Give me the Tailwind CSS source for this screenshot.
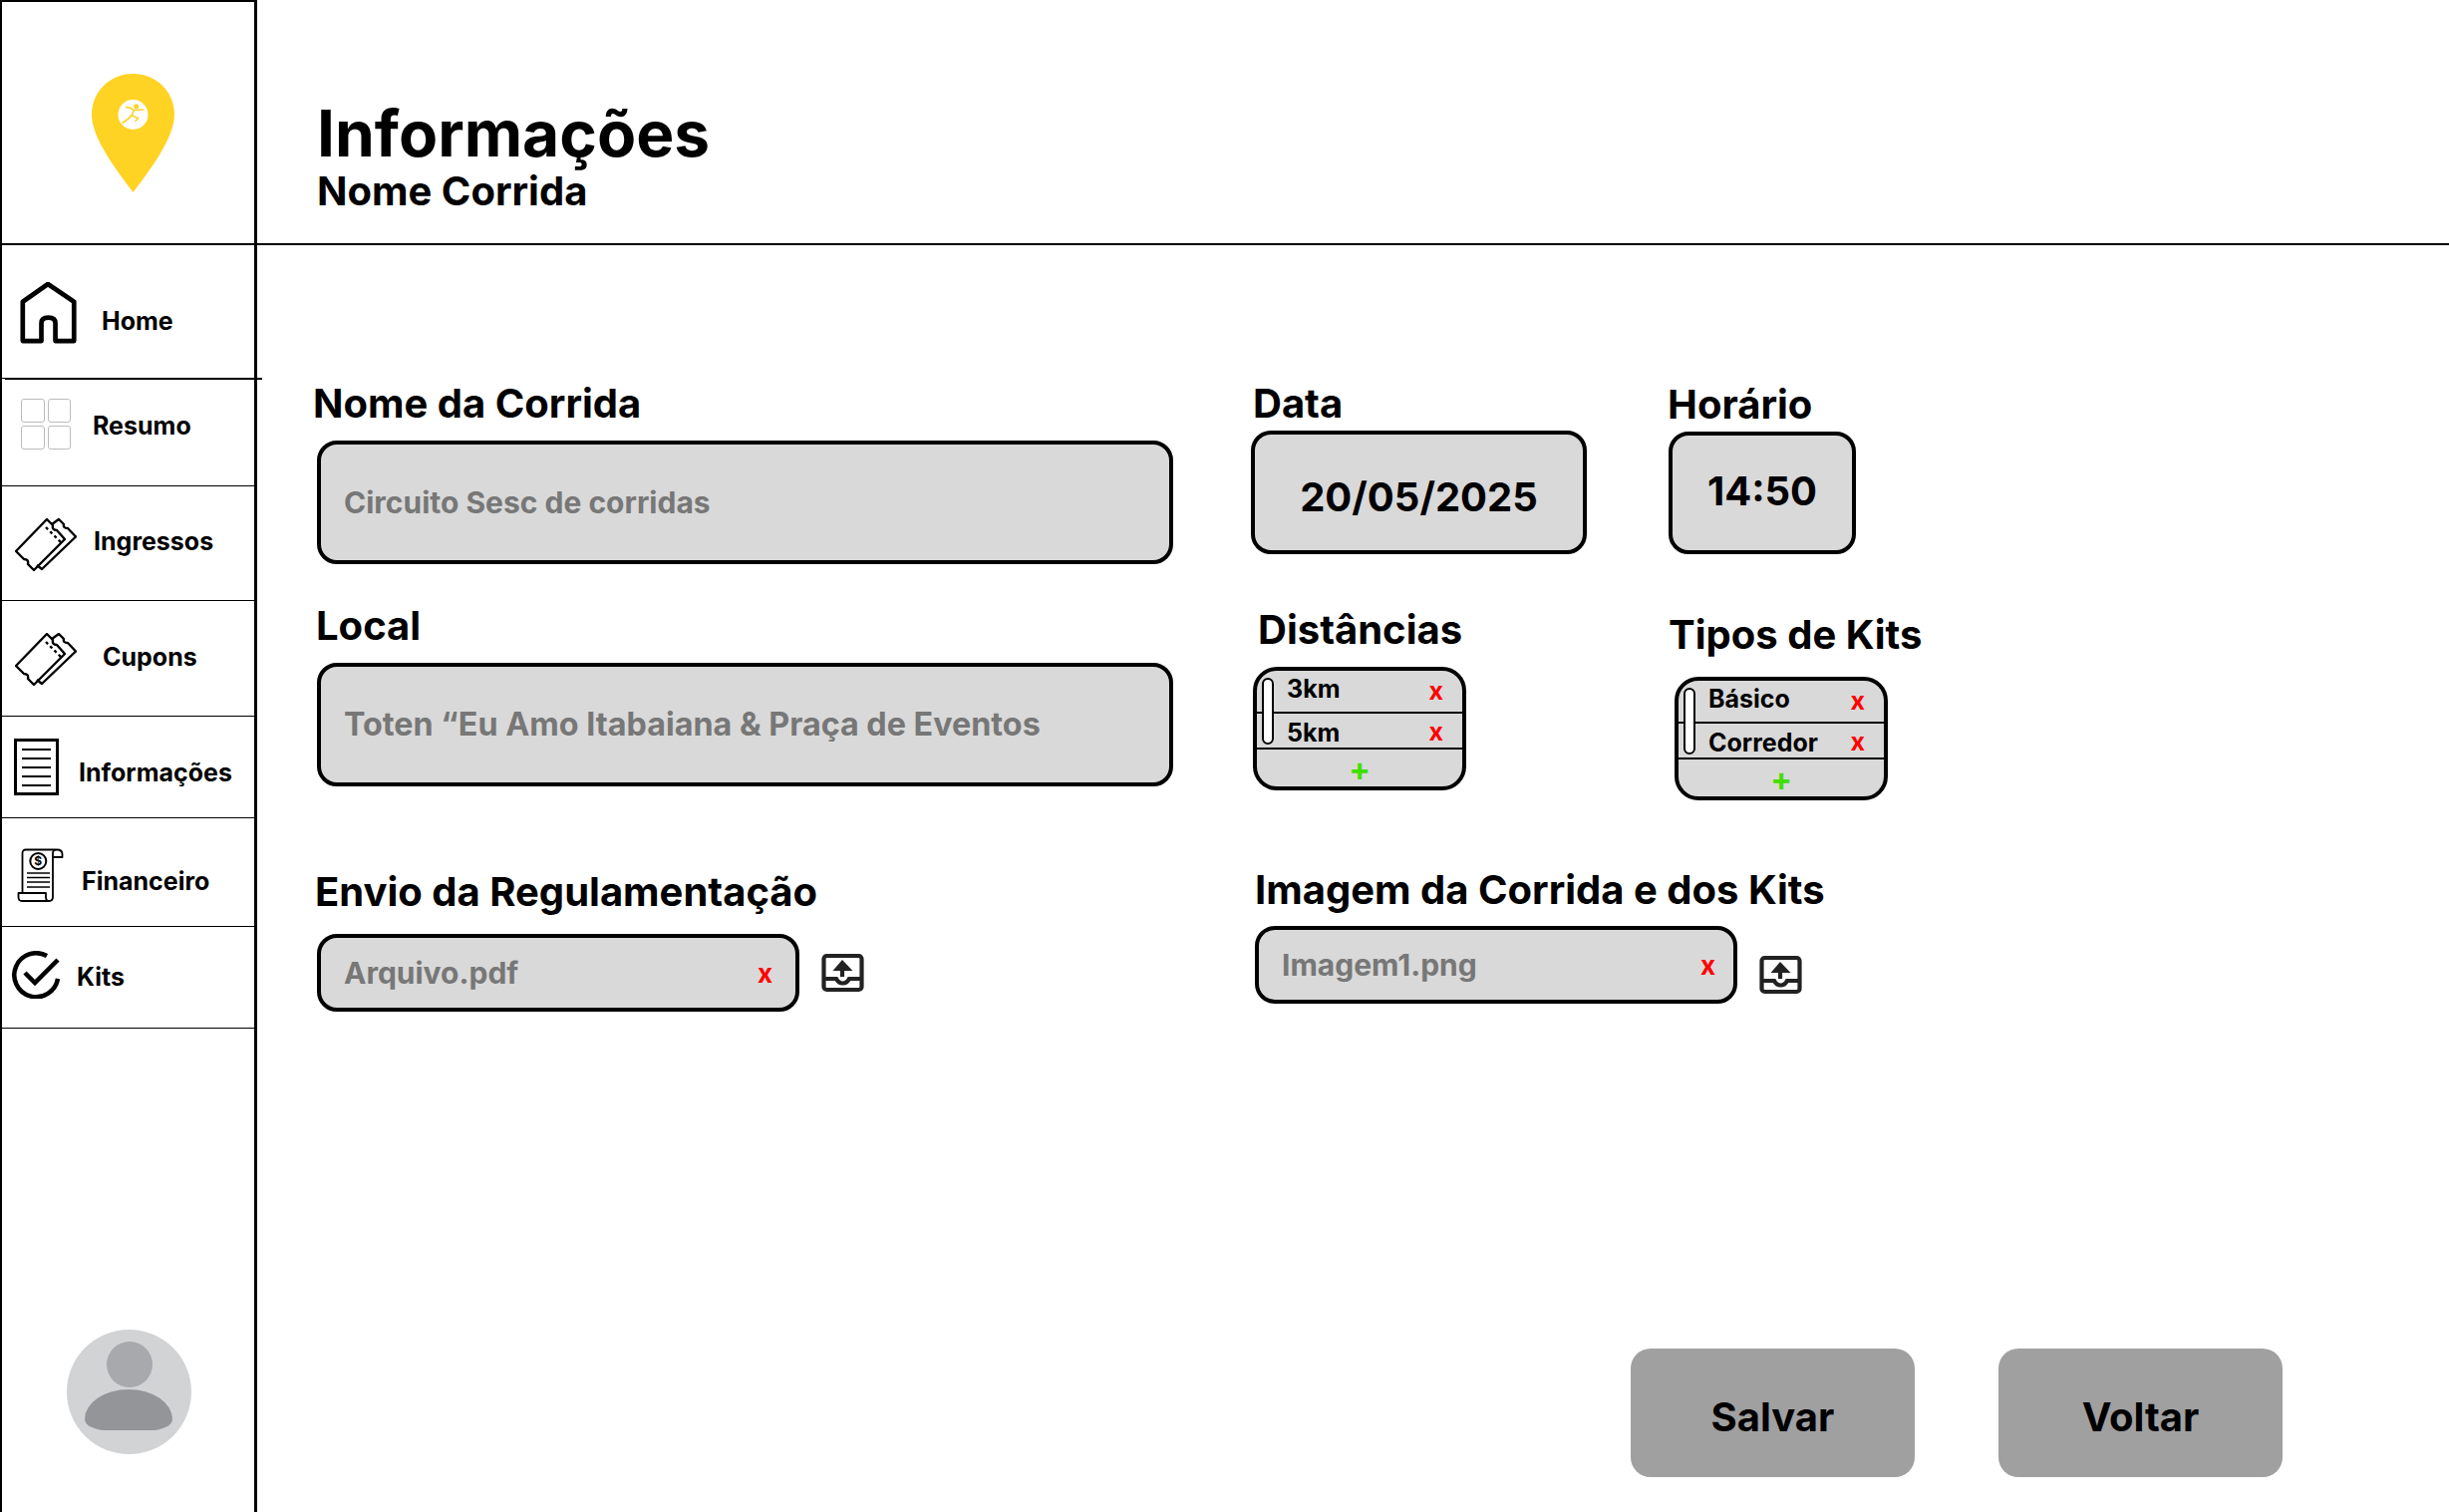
<!DOCTYPE html>
<html lang="pt-BR">
<head>
<meta charset="utf-8">
<title>Informações</title>
<script src="https://cdn.jsdelivr.net/npm/@tailwindcss/browser@4"></script>
</head>
<body class="bg-white">
<div class="flex w-[2457px] h-[1517px] overflow-hidden bg-white text-black font-['Inter',sans-serif] font-bold">
  <aside class="flex flex-col w-[258px] h-full shrink-0 border-l-2 border-r-[3px] border-t-2 border-black">
    <div class="h-[244px] shrink-0 border-b-2 border-black flex justify-center pt-[72px] pl-[10px]">
      <svg class="w-[83px] h-[119px]" viewBox="0 0 83 119">
        <path d="M41.500 0C18 0 0 18 0 41C0 64 24 96 41.500 119C59 96 83 64 83 41C83 18 65 0 41.500 0Z" fill="#FFD324"/>
        <circle cx="41.500" cy="41" r="15" fill="#fff"/>
        <circle cx="44.700" cy="32.700" r="2.500" fill="#FFD324"/>
        <path d="M34 33.500Q39 33.500 42 36.500L52.500 36M42 36.500L40.500 42L46.500 44.500L43.500 48M40.500 41Q37 46 30.500 49.500" fill="none" stroke="#FFD324" stroke-width="1.600"/>
      </svg>
    </div>
    <a class="relative h-[134px] shrink-0 border-b-[1.5px] border-black flex items-center pl-[18px] text-[25px]">
      <svg class="w-[58px] h-[62px] mt-[2px]" viewBox="0 0 62 66" fill="none" stroke="#000" stroke-width="5" stroke-linejoin="round">
        <path d="M3 21L30 2L58 21V63H38V44Q38 38 30.500 38Q23 38 23 44V63H3Z"/>
      </svg>
      <span class="ml-[24px] mt-[21px]">Home</span>
      <span class="absolute left-[3px] -right-[8px] -bottom-[1.5px] h-[1.5px] bg-black"></span>
    </a>
    <a class="h-[108px] shrink-0 border-b-[1.5px] border-black flex items-start pl-[19px] pt-[20px] text-[25px]">
      <span class="grid grid-cols-2 gap-[3px] w-[50px]">
        <span class="h-[24px] rounded-[3px] border border-[#bcbcbc]"></span>
        <span class="h-[24px] rounded-[3px] border border-[#bcbcbc]"></span>
        <span class="h-[24px] rounded-[3px] border border-[#bcbcbc]"></span>
        <span class="h-[24px] rounded-[3px] border border-[#bcbcbc]"></span>
      </span>
      <span class="ml-[22px] mt-[9px]">Resumo</span>
    </a>
    <a class="h-[115px] shrink-0 border-b-[1.5px] border-black flex items-center pl-[13px] text-[25px]">
      <svg class="w-[62px] h-[54px] mt-[3px]" viewBox="0 0 62 54" fill="none" stroke="#000" stroke-width="2.400" stroke-linejoin="round">
        <path d="M1 33L32 1L38 7Q37 12 42 12L50 21L19 52L13 46Q14 41 9 41Z"/>
        <path d="M37 6L44 1L49 6Q48 10 53 10L61 18.500L27 51L22 47"/>
        <path d="M31 9L46 24" stroke-dasharray="3 3"/>
      </svg>
      <span class="ml-[17px] -mt-[2px]">Ingressos</span>
    </a>
    <a class="h-[116px] shrink-0 border-b-[1.5px] border-black flex items-center pl-[13px] text-[25px]">
      <svg class="w-[62px] h-[54px] mt-[3px]" viewBox="0 0 62 54" fill="none" stroke="#000" stroke-width="2.400" stroke-linejoin="round">
        <path d="M1 33L32 1L38 7Q37 12 42 12L50 21L19 52L13 46Q14 41 9 41Z"/>
        <path d="M37 6L44 1L49 6Q48 10 53 10L61 18.500L27 51L22 47"/>
        <path d="M31 9L46 24" stroke-dasharray="3 3"/>
      </svg>
      <span class="ml-[26px] -mt-[2px]">Cupons</span>
    </a>
    <a class="h-[102px] shrink-0 border-b-[1.5px] border-black flex items-center pl-[12px] text-[25px]">
      <span class="flex flex-col gap-[7px] justify-center items-center w-[45px] h-[57px] border-[3px] border-black">
        <span class="w-[29px] h-[2px] bg-black"></span>
        <span class="w-[29px] h-[2px] bg-black"></span>
        <span class="w-[29px] h-[2px] bg-black"></span>
        <span class="w-[29px] h-[2px] bg-black"></span>
        <span class="w-[29px] h-[2px] bg-black"></span>
      </span>
      <span class="ml-[20px] mt-[12px]">Informações</span>
    </a>
    <a class="h-[109px] shrink-0 border-b-[1.5px] border-black flex items-center pl-[15px] text-[25px]">
      <svg class="w-[47px] h-[54px] mt-[5px]" viewBox="0 0 47 54" fill="none" stroke="#000" stroke-width="1.800" stroke-linejoin="round">
        <path d="M5.500 45V5Q5.500 1.500 9 1.500H40Q45.500 1.500 45.500 6V9H36V5Q36 1.500 40 1.500"/>
        <path d="M36 9V49Q36 53 32 53H5Q1.500 53 1.500 49V45H29V49Q29 53 32 53"/>
        <circle cx="21.300" cy="13" r="8" stroke-width="2"/>
        <path d="M10 25H33M10 29.500H33M10 34H33M10 39H33" stroke-width="1.600"/>
        <text x="21.300" y="17.300" font-size="12" font-weight="700" text-anchor="middle" fill="#000" stroke="none" font-family="Inter">$</text>
      </svg>
      <span class="ml-[18px] mt-[19px]">Financeiro</span>
    </a>
    <a class="h-[102px] shrink-0 border-b-[1.5px] border-black flex items-center pl-[10px] text-[25px]">
      <svg class="w-[48px] h-[48px] -mt-[6px]" viewBox="0 0 48 48" fill="none" stroke="#000" stroke-width="4.500">
        <path d="M46 28A22 22 0 1 1 35 5"/>
        <path d="M13 22L23 32L46 9"/>
      </svg>
      <span class="ml-[17px]">Kits</span>
    </a>
    <div class="mt-auto mb-[58px] ml-[65px] relative w-[125px] h-[125px] rounded-full bg-[#d1d3d4] overflow-hidden">
      <span class="absolute left-[40px] top-[12px] w-[46px] h-[46px] rounded-full bg-[#a7a9ac]"></span>
      <span class="absolute left-[18px] top-[60px] w-[88px] h-[41px] rounded-[44px_44px_22px_22px/30px_30px_11px_11px] bg-[#939598]"></span>
    </div>
  </aside>

  <main class="flex-1 flex flex-col min-w-0">
    <header class="h-[246px] shrink-0 border-b-2 border-black pl-[60px] pt-[99px]">
      <h1 class="text-[64px] leading-[70px]">Informações</h1>
      <h2 class="text-[40px] leading-[46px]">Nome Corrida</h2>
    </header>

    <section class="flex pt-[135px] pl-[60px]">
      <div class="w-[937px] shrink-0">
        <p class="text-[40px] leading-[48px] -ml-[4px]">Nome da Corrida</p>
        <div class="mt-[13px] w-[859px] h-[124px] rounded-[20px] border-[4px] border-black bg-[#d9d9d9] flex items-center pl-[23px] text-[30px] text-[#777]">Circuito Sesc de corridas</div>
        <p class="mt-[38px] text-[40px] leading-[48px] -ml-[1px]">Local</p>
        <div class="mt-[13px] w-[859px] h-[124px] rounded-[20px] border-[4px] border-black bg-[#d9d9d9] flex items-center pl-[23px] text-[32.300px] text-[#777]">Toten “Eu Amo Itabaiana &amp; Praça de Eventos</div>
      </div>
      <div class="w-[419px] shrink-0">
        <p class="text-[40px] leading-[48px] ml-[2px]">Data</p>
        <div class="mt-[3px] w-[337px] h-[124px] rounded-[20px] border-[4px] border-black bg-[#d9d9d9] flex items-center justify-center text-[40px] pt-[10px]">20/05/2025</div>
        <p class="mt-[52px] text-[40px] leading-[48px] ml-[7px]">Distâncias</p>
        <div class="relative mt-[13px] ml-[2px] w-[214px] h-[124px] rounded-[24px] border-[4px] border-black bg-[#d9d9d9] text-[25px] overflow-hidden">
          <div class="h-[43px] border-b-2 border-black flex items-center justify-between pl-[30px] pr-[19px]"><span class="-mt-[4px]">3km</span><span class="text-[#f00]">x</span></div>
          <div class="h-[36px] border-b-2 border-black flex items-center justify-between pl-[30px] pr-[19px]"><span class="mt-[6px]">5km</span><span class="mt-[4px] text-[#f00]">x</span></div>
          <div class="h-[37px] flex items-center justify-center text-[32px] text-[#3fe000] pt-[2px]">+</div>
          <span class="absolute left-[5px] top-[7px] w-[12px] h-[67px] rounded-full border-2 border-black bg-white"></span>
        </div>
      </div>
      <div>
        <p class="mt-[1px] text-[40px] leading-[48px] -ml-[1px]">Horário</p>
        <div class="mt-[3px] w-[188px] h-[123px] rounded-[20px] border-[4px] border-black bg-[#d9d9d9] flex items-center justify-center text-[40px]"><span class="-mt-[4px]">14:50</span></div>
        <p class="mt-[57px] text-[40px] leading-[48px]">Tipos de Kits</p>
        <div class="relative mt-[18px] ml-[6px] w-[214px] h-[124px] rounded-[24px] border-[4px] border-black bg-[#d9d9d9] text-[25px] overflow-hidden">
          <div class="h-[43px] border-b-2 border-black flex items-center justify-between pl-[30px] pr-[19px]"><span class="-mt-[4px]">Básico</span><span class="text-[#f00]">x</span></div>
          <div class="h-[36px] border-b-2 border-black flex items-center justify-between pl-[30px] pr-[19px]"><span class="mt-[6px]">Corredor</span><span class="mt-[4px] text-[#f00]">x</span></div>
          <div class="h-[37px] flex items-center justify-center text-[32px] text-[#3fe000] pt-[2px]">+</div>
          <span class="absolute left-[5px] top-[7px] w-[12px] h-[67px] rounded-full border-2 border-black bg-white"></span>
        </div>
      </div>
    </section>

    <section class="flex mt-[68px] pl-[60px]">
      <div class="w-[941px] shrink-0">
        <p class="text-[40px] leading-[48px] -ml-[2px]">Envio da Regulamentação</p>
        <div class="mt-[18px] flex items-center">
          <div class="w-[484px] h-[78px] rounded-[20px] border-[4px] border-black bg-[#d9d9d9] flex items-center justify-between pl-[23px] pr-[23px] text-[30px] text-[#777]"><span>Arquivo.pdf</span><span class="text-[26px] text-[#f00]">x</span></div>
          <svg class="ml-[22px] w-[44px] h-[42px]" viewBox="0 0 44 42" fill="none" stroke="#222" stroke-width="4.200">
            <rect x="2.500" y="4" width="38" height="34" rx="3"/>
            <path d="M2 27H15C18 33 25 33 28 27H41"/>
            <path d="M21 25V15"/>
            <path d="M11.500 19L21 8L31.500 19Z" fill="#222" stroke="none"/>
          </svg>
        </div>
      </div>
      <div>
        <p class="-mt-[2px] text-[40px] leading-[48px]">Imagem da Corrida e dos Kits</p>
        <div class="mt-[12px] flex items-start">
          <div class="w-[484px] h-[78px] rounded-[20px] border-[4px] border-black bg-[#d9d9d9] flex items-center justify-between pl-[23px] pr-[18px] text-[30px] text-[#777]"><span>Imagem1.png</span><span class="text-[26px] text-[#f00]">x</span></div>
          <svg class="ml-[22px] mt-[28px] w-[44px] h-[42px]" viewBox="0 0 44 42" fill="none" stroke="#222" stroke-width="4.200">
            <rect x="2.500" y="4" width="38" height="34" rx="3"/>
            <path d="M2 27H15C18 33 25 33 28 27H41"/>
            <path d="M21 25V15"/>
            <path d="M11.500 19L21 8L31.500 19Z" fill="#222" stroke="none"/>
          </svg>
        </div>
      </div>
    </section>

    <div class="mt-auto mb-[35px] mr-[167px] flex justify-end gap-[84px] text-[40px]">
      <button class="w-[285px] h-[129px] rounded-[20px] bg-[#a0a0a0] pt-[9px]">Salvar</button>
      <button class="w-[285px] h-[129px] rounded-[20px] bg-[#a0a0a0] pt-[9px]">Voltar</button>
    </div>
  </main>
</div>
</body>
</html>
